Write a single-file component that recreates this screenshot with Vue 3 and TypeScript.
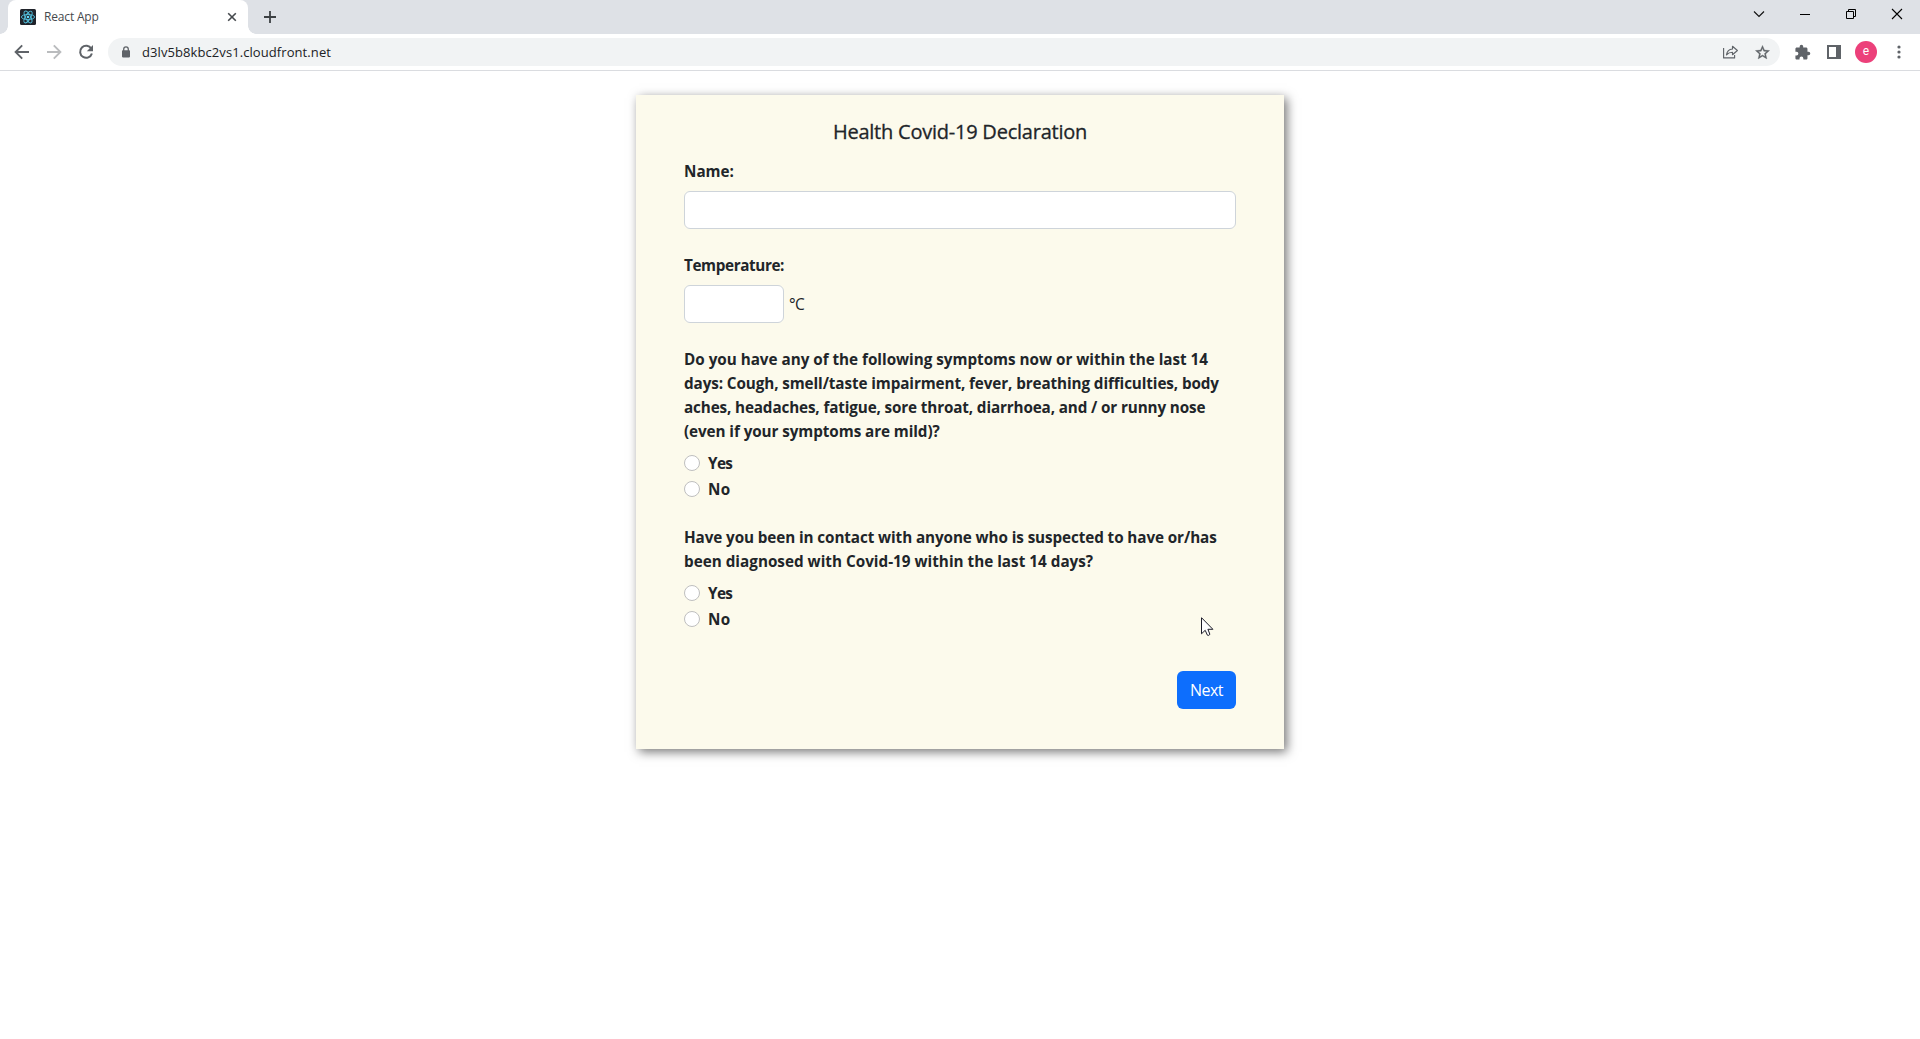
<script setup lang="ts">
import { ref } from 'vue'

interface Line {
  text: string
  tracking: string
}

interface Question {
  id: string
  lines: Line[]
}

const questions: Question[] = [
  {
    id: 'symptoms',
    lines: [
      { text: 'Do you have any of the following symptoms now or within the last 14', tracking: '-0.018px' },
      { text: 'days: Cough, smell/taste impairment, fever, breathing difficulties, body', tracking: '-0.1px' },
      { text: 'aches, headaches, fatigue, sore throat, diarrhoea, and / or runny nose', tracking: '-0.135px' },
      { text: '(even if your symptoms are mild)?', tracking: '-0.08px' },
    ],
  },
  {
    id: 'contact',
    lines: [
      { text: 'Have you been in contact with anyone who is suspected to have or/has', tracking: '-0.095px' },
      { text: 'been diagnosed with Covid-19 within the last 14 days?', tracking: '0.01px' },
    ],
  },
]

const name = ref('')
const temperature = ref('')
const answers = ref<Record<string, string>>({})
</script>

<template>
  <div class="browser">
    <header class="tab-strip">
      <div class="tab">
        <svg class="favicon" width="16" height="16" viewBox="0 0 16 16">
          <rect width="16" height="16" rx="1.5" fill="#20232a" />
          <g fill="none" stroke="#53c1de" stroke-width="0.9">
            <ellipse cx="8" cy="8" rx="6.6" ry="2.6" />
            <ellipse cx="8" cy="8" rx="6.6" ry="2.6" transform="rotate(60 8 8)" />
            <ellipse cx="8" cy="8" rx="6.6" ry="2.6" transform="rotate(120 8 8)" />
          </g>
          <circle cx="8" cy="8" r="1.3" fill="#61dafb" />
        </svg>
        <span class="tab-title">React App</span>
        <svg class="tab-close" width="10" height="10" viewBox="0 0 10 10">
          <path d="M1.2 1.2l7.6 7.6M8.8 1.2L1.2 8.8" stroke="#45494d" stroke-width="1.6" />
        </svg>
      </div>
      <svg class="new-tab" width="12" height="12" viewBox="0 0 12 12">
        <path d="M6 0v12M0 6h12" stroke="#3c4043" stroke-width="1.8" />
      </svg>
      <div class="window-controls">
        <svg width="46" height="28" viewBox="0 0 46 28"><path d="M18 11.500l5 5 5-5" fill="none" stroke="#111" stroke-width="1.150" /></svg>
        <svg width="46" height="28" viewBox="0 0 46 28"><path d="M18 14.500h10" stroke="#000" /></svg>
        <svg width="46" height="28" viewBox="0 0 46 28"><path d="M18.500 11.500h7v7h-7zM20.500 11.500v-2h7v7h-2" fill="none" stroke="#000" /></svg>
        <svg width="46" height="28" viewBox="0 0 46 28"><path d="M18 9l10 10M28 9L18 19" stroke="#000" stroke-width="1.100" /></svg>
      </div>
    </header>

    <nav class="toolbar">
      <svg width="32" height="32" viewBox="0 0 32 32"><path d="M23 16H10M16.200 9.400L9.600 16l6.600 6.600" fill="none" stroke="#5f6368" stroke-width="1.900" /></svg>
      <svg width="32" height="32" viewBox="0 0 32 32"><path d="M9 16h13M15.800 9.400l6.600 6.600-6.600 6.600" fill="none" stroke="#babcbe" stroke-width="1.900" /></svg>
      <svg width="32" height="32" viewBox="0 0 32 32">
        <path d="M21.300 12.700A6 6 0 1 0 21.900 17.500" fill="none" stroke="#5f6368" stroke-width="2" />
        <path d="M23 9v6.200h-6.200z" fill="#5f6368" />
      </svg>
      <div class="omnibox">
        <svg width="10" height="12" viewBox="0 0 10 12">
          <path d="M2.700 5V3.200a2.300 2.300 0 0 1 4.600 0V5" fill="none" stroke="#5f6368" stroke-width="1.300" />
          <rect x="1" y="4.200" width="8" height="7.200" rx="0.800" fill="#5f6368" />
        </svg>
        <span class="url">d3lv5b8kbc2vs1.cloudfront.net</span>
        <svg class="share" width="16" height="14" viewBox="0 0 16 14">
          <path d="M0.600 3v9.900h11V10M3.500 9.800c.5-3.500 2.400-5.500 6-5.800V1.300l4.900 4.200-4.900 4.200V7.200C7 7.200 5.200 7.900 3.500 9.800z" fill="none" stroke="#5f6368" stroke-width="1.150" stroke-linejoin="round" />
        </svg>
        <svg width="17" height="17" viewBox="0 0 24 24">
          <path d="M22 9.240l-7.190-.62L12 2 9.190 8.630 2 9.240l5.460 4.730L5.820 21 12 17.270 18.180 21l-1.630-7.030L22 9.240zM12 15.400l-3.760 2.270 1-4.280-3.320-2.880 4.380-.38L12 6.100l1.710 4.040 4.380.38-3.320 2.880 1 4.280L12 15.400z" fill="#5f6368" stroke="#5f6368" stroke-width="0.500" />
        </svg>
      </div>
      <div class="actions">
        <svg class="puzzle" width="17" height="17" viewBox="0 0 24 24">
          <path d="M20.500 11H19V7c0-1.100-.9-2-2-2h-4V3.500a2.500 2.500 0 0 0-5 0V5H4c-1.100 0-2 .9-2 2v3.800h1.500a2.700 2.700 0 0 1 0 5.400H2V20c0 1.100.9 2 2 2h3.800v-1.500a2.700 2.700 0 0 1 5.400 0V22H17c1.100 0 2-.9 2-2v-4h1.500a2.500 2.500 0 0 0 0-5z" fill="#5f6368" />
        </svg>
        <svg class="panel" width="14" height="14" viewBox="0 0 14 14">
          <path fill-rule="evenodd" d="M0 0h14v14H0zM2 2v10h7V2z" fill="#5f6368" />
        </svg>
        <span class="avatar">e</span>
        <svg class="menu" width="4" height="14" viewBox="0 0 4 14">
          <g fill="#5f6368"><circle cx="2" cy="2" r="1.600" /><circle cx="2" cy="7" r="1.600" /><circle cx="2" cy="12" r="1.600" /></g>
        </svg>
      </div>
    </nav>

    <main class="page">
      <form class="card" @submit.prevent>
        <h5 class="title">Health Covid-19 Declaration</h5>

        <div class="group">
          <label class="label" for="name">Name:</label>
          <input id="name" v-model="name" class="control" type="text" />
        </div>

        <div class="group">
          <label class="label temp-label" for="temperature">Temperature:</label>
          <div class="temp-row">
            <input id="temperature" v-model="temperature" class="control temp" type="text" />
            <span class="unit">°C</span>
          </div>
        </div>

        <fieldset v-for="q in questions" :key="q.id" class="group question">
          <div class="label">
            <span v-for="l in q.lines" :key="l.text" class="line" :style="{ letterSpacing: l.tracking }">{{ l.text }}</span>
          </div>
          <label class="check">
            <input v-model="answers[q.id]" class="radio" type="radio" :name="q.id" value="yes" />
            <span class="option yes">Yes</span>
          </label>
          <label class="check">
            <input v-model="answers[q.id]" class="radio" type="radio" :name="q.id" value="no" />
            <span class="option no">No</span>
          </label>
        </fieldset>

        <div class="footer">
          <button class="next" type="submit">Next</button>
        </div>
      </form>
    </main>

    <svg class="cursor" width="13" height="20" viewBox="0 0 13 20">
      <path d="M0.500 0.700V16.800L4.200 13.300L6.400 18.200Q7.800 19 8.900 17.300L6.900 12.300H11.900Z" fill="#fff" stroke="#1c1c28" stroke-width="1" />
    </svg>
  </div>
</template>

<style>
body {
  background: #fff;
}
</style>

<style scoped>
.browser {
  width: 1920px;
  height: 1039px;
  overflow: hidden;
  position: relative;
  display: flex;
  flex-direction: column;
  background: #fff;
  color: #212529;
  font-family: "Open Sans", "Noto Sans", sans-serif;
}
.browser *,
.browser *::before,
.browser *::after {
  box-sizing: border-box;
}
svg {
  display: block;
  flex: none;
}

.tab-strip {
  flex: none;
  height: 34px;
  background: #dee1e6;
  display: flex;
  align-items: center;
  padding-left: 8px;
}
.tab {
  position: relative;
  width: 240px;
  height: 34px;
  padding: 0 11px 0 12px;
  display: flex;
  align-items: center;
  background: #fff;
  border-radius: 8px 8px 0 0;
}
.tab::before,
.tab::after {
  content: "";
  position: absolute;
  bottom: 0;
  width: 8px;
  height: 8px;
}
.tab::before {
  left: -8px;
  background: radial-gradient(circle at 0 0, transparent 7.500px, #fff 8px);
}
.tab::after {
  right: -8px;
  background: radial-gradient(circle at 100% 0, transparent 7.500px, #fff 8px);
}
.tab-title {
  margin-left: 8px;
  flex: 1;
  font-size: 12px;
  line-height: 16px;
  letter-spacing: -0.170px;
  color: #45494d;
}
.new-tab {
  margin-left: 16px;
}
.window-controls {
  margin-left: auto;
  height: 34px;
  display: flex;
  align-items: flex-start;
}

.toolbar {
  flex: none;
  height: 37px;
  border-bottom: 1px solid #dadce0;
  display: flex;
  align-items: center;
  padding-left: 6px;
}
.omnibox {
  margin-left: 6px;
  width: 1672px;
  height: 28px;
  padding: 0 9.500px 0 13px;
  border-radius: 14px;
  background: #f1f3f4;
  display: flex;
  align-items: center;
}
.url {
  flex: 1;
  margin-left: 11px;
  font-size: 13px;
  line-height: 20px;
  letter-spacing: 0.080px;
  color: #202124;
}
.share {
  margin-right: 14.500px;
}
.actions {
  flex: 1;
  display: flex;
  align-items: center;
}
.puzzle {
  margin-left: 13.500px;
}
.panel {
  margin-left: 16.500px;
}
.avatar {
  margin-left: 14px;
  width: 22px;
  height: 22px;
  border-radius: 50%;
  background: #ec407a;
  color: #fff;
  font: 12px/21px Roboto, sans-serif;
  text-align: center;
}
.menu {
  margin-left: 19.500px;
}

.page {
  flex: 1;
  padding-top: 24px;
}
.card {
  width: 648px;
  height: 654px;
  margin: 0 auto;
  padding: 25px 48px 40px;
  background: #fcfaec;
  box-shadow: 3px 3px 10px #777;
  display: flex;
  flex-direction: column;
}
.title {
  margin: 0 0 15px;
  font-size: 20px;
  font-weight: 400;
  line-height: 24px;
  letter-spacing: -0.230px;
  text-align: center;
  -webkit-text-stroke: 0.300px currentColor;
}
.group {
  margin: 0 0 24px;
  padding: 0;
  border: 0;
  display: flex;
  flex-direction: column;
}
.question {
  margin-bottom: 22px;
}
.label {
  display: block;
  margin-bottom: 8px;
  font-size: 15.250px;
  font-weight: 700;
  line-height: 24px;
}
.temp-label {
  letter-spacing: -0.370px;
}
.line {
  display: block;
  white-space: nowrap;
}
.control {
  width: 100%;
  height: 38px;
  margin: 0;
  padding: 6px 12px;
  border: 1px solid #ced4da;
  border-radius: 6px;
  background: #fff;
  font: inherit;
  outline: none;
}
.temp-row {
  display: flex;
  align-items: center;
}
.temp {
  width: 100px;
}
.unit {
  margin-left: 5px;
  font-size: 15.500px;
  line-height: 24px;
  letter-spacing: -0.600px;
}
.check {
  height: 24px;
  margin-bottom: 2px;
  display: flex;
  align-items: center;
}
.radio {
  appearance: none;
  width: 16px;
  height: 16px;
  margin: 0 8px 0 0;
  border: 1px solid #bfbfbf;
  border-radius: 50%;
  background: #fff;
}
.option {
  font-size: 15.250px;
  font-weight: 700;
  line-height: 24px;
}
.yes {
  letter-spacing: -0.600px;
}
.no {
  letter-spacing: 0.400px;
}
.footer {
  margin-top: auto;
  display: flex;
  justify-content: flex-end;
}
.next {
  width: 59px;
  height: 38px;
  padding: 0;
  border: 0;
  border-radius: 6px;
  background: #0d6efd;
  color: #fff;
  font: 16px/24px "Open Sans", sans-serif;
  letter-spacing: -0.500px;
}
.cursor {
  position: absolute;
  left: 1201px;
  top: 617px;
}
</style>
